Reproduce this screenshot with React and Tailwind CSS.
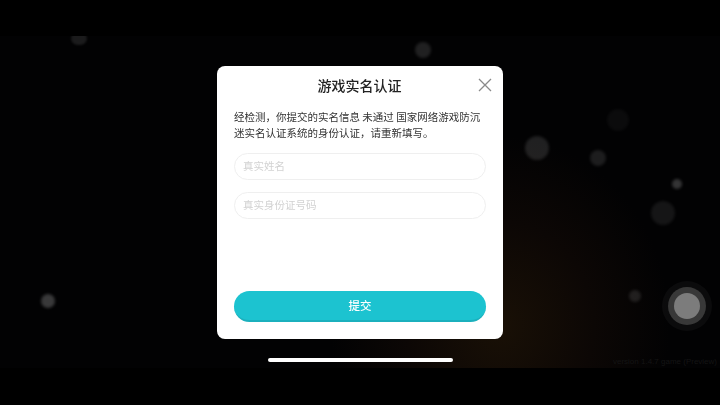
const dots = [
  { x: 423, y: 50, r: 8, c: 'rgba(255,255,255,0.12)' },
  { x: 537, y: 148, r: 12, c: 'rgba(255,255,255,0.12)' },
  { x: 618, y: 120, r: 11, c: 'rgba(255,255,255,0.04)' },
  { x: 598, y: 158, r: 8, c: 'rgba(255,255,255,0.11)' },
  { x: 677, y: 184, r: 5, c: 'rgba(255,255,255,0.2)' },
  { x: 663, y: 213, r: 12, c: 'rgba(255,255,255,0.08)' },
  { x: 635, y: 296, r: 6, c: 'rgba(255,255,255,0.11)' },
  { x: 48, y: 301, r: 7, c: 'rgba(255,255,255,0.22)' },
];

const message = '经检测\uFF0C你提交的实名信息 未通过 国家网络游戏防沉迷实名认证系统的身份认证\uFF0C请重新填写。';

function Dot({ x, y, r, c }) {
  return (
    <div
      className="absolute rounded-full blur-[1.5px]"
      style={{ left: x - r, top: y - r, width: r * 2, height: r * 2, background: c }}
    />
  );
}

export default function App() {
  return (
    <div className="relative w-[720px] h-[405px] overflow-hidden bg-black flex items-center justify-center font-['Noto_Sans_CJK_SC','Liberation_Sans',sans-serif]">
      {/* game scene behind the dialog */}
      <div className="absolute left-0 right-0 top-[36px] h-[332px] overflow-hidden bg-[radial-gradient(ellipse_170px_190px_at_500px_290px,#191006_0%,#0c0705_55%,#020203_100%)]">
        <div className="absolute left-[71px] top-[-4px] w-[16px] h-[13px] rounded-full bg-white/10 blur-[1px]" />
      </div>
      {dots.map((d) => (
        <Dot key={`${d.x}-${d.y}`} {...d} />
      ))}

      {/* joystick */}
      <div className="absolute left-[662px] top-[281px] w-[50px] h-[50px] rounded-full bg-white/[0.04] flex items-center justify-center blur-[0.5px]">
        <div className="w-[38px] h-[38px] rounded-full bg-[#383838] flex items-center justify-center">
          <div className="w-[26px] h-[26px] rounded-full bg-[#7c7c7c]" />
        </div>
      </div>

      <div className="absolute right-[3px] top-[357px] text-[8px] leading-[10px] text-[#141414] whitespace-nowrap font-['Liberation_Sans',sans-serif]">
        version 1.4.7 game (Preview)
      </div>

      {/* dialog */}
      <div className="relative w-[286px] h-[273px] rounded-[8px] bg-white flex flex-col px-[17px] blur-[0.3px]">
        <div className="h-[38px] flex items-center justify-center text-[14px] font-medium text-[#222] mr-[1px]">
          游戏实名认证
        </div>
        <button className="absolute right-[11px] top-[12px] w-[14px] h-[14px]">
          <svg viewBox="0 0 14 14" className="w-[14px] h-[14px]" fill="none" stroke="#8a8a8a" strokeWidth="1.3">
            <path d="M1 1 L13 13 M13 1 L1 13" />
          </svg>
        </button>

        <p className="mt-[5px] text-[10.5px] leading-[16px] text-[#333] w-[252px]">{message}</p>

        <input
          readOnly
          placeholder="真实姓名"
          className="mt-[12px] h-[27px] w-[252px] rounded-full border border-[#efefef] bg-white px-[8px] pb-[2px] text-[10.5px] outline-none placeholder:text-[#d2d2d2]"
        />
        <input
          readOnly
          placeholder="真实身份证号码"
          className="mt-[12px] h-[27px] w-[252px] rounded-full border border-[#efefef] bg-white px-[8px] pb-[2px] text-[10.5px] outline-none placeholder:text-[#d2d2d2]"
        />

        <button className="mt-[72px] h-[31px] w-[252px] rounded-full bg-[#1cc3d0] border-b-2 border-[#1bb0bd] text-white text-[11.5px] font-medium flex items-center justify-center">
          提交
        </button>
      </div>

      {/* home indicator */}
      <div className="absolute left-[268px] top-[358px] w-[185px] h-[4px] rounded-full bg-white" />
    </div>
  );
}
